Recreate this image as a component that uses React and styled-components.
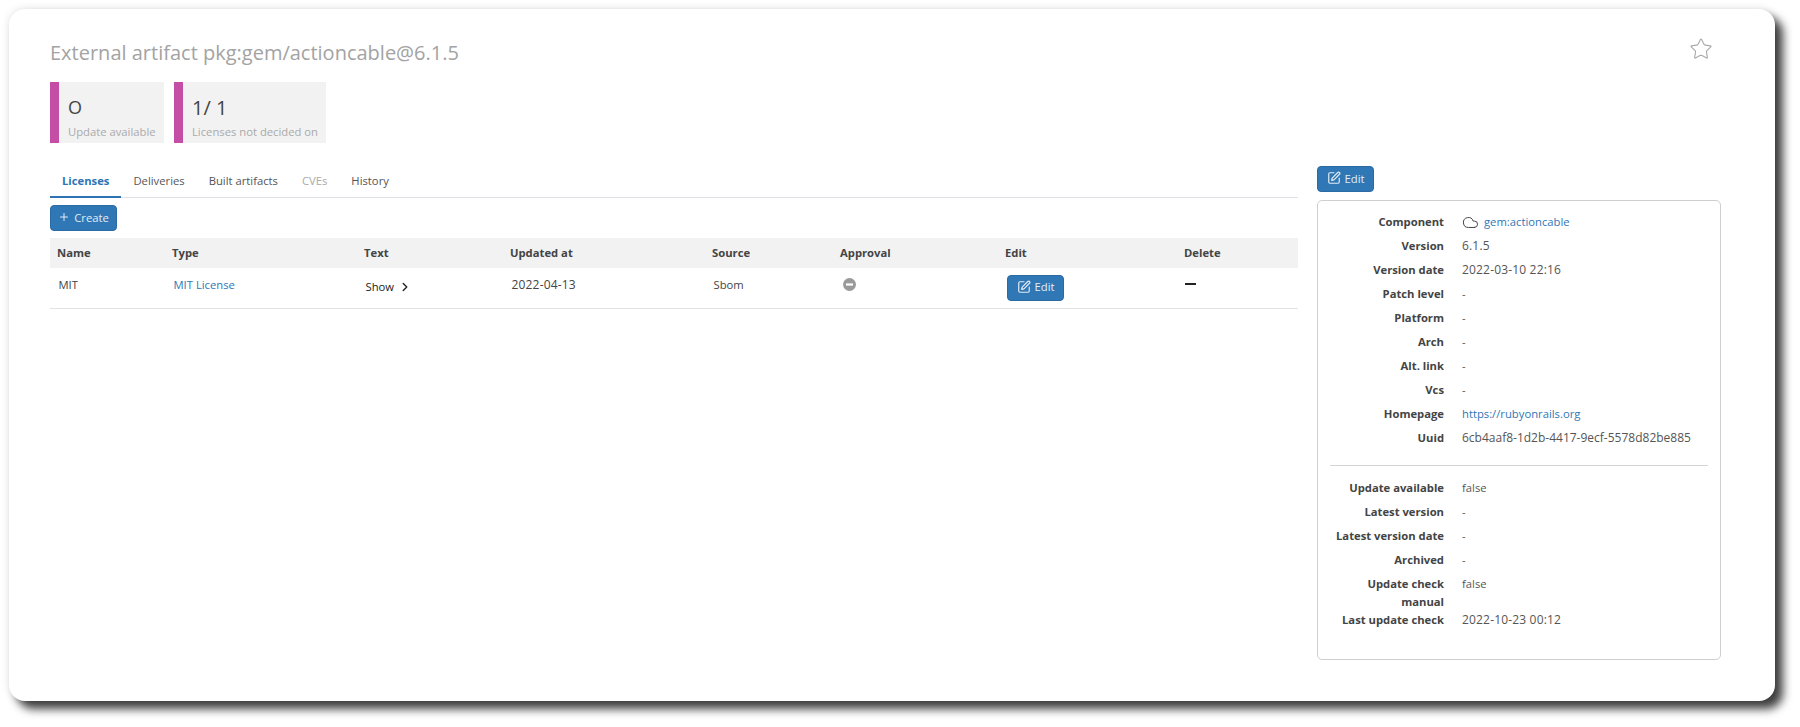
import React from "react";
import styled, { createGlobalStyle } from "styled-components";
import { Star, Cloud, ChevronRight, Plus, SquarePen } from "lucide-react";

const Global = createGlobalStyle`
  html, body { margin: 0; padding: 0; background: #fff; }
  body { font-family: "Open Sans", "Noto Sans", "Liberation Sans", sans-serif; width: 1800px; height: 727px; overflow: hidden; }
`;

const Page = styled.div`
  box-sizing: border-box;
  width: 1800px;
  height: 727px;
  padding: 9px 25px 26px 9px;
`;
const Card = styled.main`
  box-sizing: border-box;
  height: 692px;
  background: #fff;
  border-radius: 16px;
  box-shadow: 8px 8px 10px rgba(0, 0, 0, 0.75), 0 0 8px rgba(0, 0, 0, 0.12);
  padding: 27px 54px 0 41px;
  display: flex;
  flex-direction: column;
`;
const Header = styled.header`
  display: flex;
  justify-content: space-between;
  align-items: flex-start;
  height: 46px;
`;
const Title = styled.h1`
  margin: 3px 0 0;
  font-size: 20px;
  line-height: 28px;
  font-weight: 400;
  color: #a3a3a3;
`;
const StarButton = styled.span`
  display: flex;
  color: #a9a9a9;
  margin: 1px 8px 0 0;
`;
const Stats = styled.div`
  display: flex;
  gap: 10px;
  height: 61px;
`;
const Stat = styled.div`
  box-sizing: border-box;
  width: ${(p) => p.$w}px;
  background: #f2f2f2;
  border-left: 9px solid #c44ea5;
  padding: 12px 0 0 9px;
`;
const StatValue = styled.div`
  font-size: ${(p) => p.$size}px;
  line-height: 27px;
  color: #444;
`;
const StatLabel = styled.div`
  font-size: 11.25px;
  line-height: 16px;
  margin-top: 3px;
  color: #aaa;
  white-space: nowrap;
`;
const Columns = styled.div`
  display: flex;
  gap: 19px;
  margin-top: 23px;
  align-items: flex-start;
`;
const Left = styled.section`
  width: 1248px;
  flex: none;
  padding-top: 4px;
`;
const Tabs = styled.nav`
  display: flex;
  height: 27px;
  border-bottom: 1px solid #dee2e6;
`;
const Tab = styled.a`
  box-sizing: border-box;
  height: 28px;
  padding: 0 12px;
  font-size: 11.25px;
  line-height: 21px;
  color: ${(p) => (p.$active ? "#2e74b5" : p.$disabled ? "#aaa" : "#555")};
  font-weight: ${(p) => (p.$active ? 700 : 400)};
  border-bottom: ${(p) => (p.$active ? "2px solid #2e74b5" : "none")};
  white-space: nowrap;
`;
const Button = styled.button`
  display: flex;
  align-items: center;
  justify-content: center;
  gap: 4px;
  box-sizing: border-box;
  width: ${(p) => p.$w}px;
  height: 26px;
  padding: 0 0 2px;
  border: 1px solid #2a6aa5;
  border-radius: 4px;
  background: #3077b5;
  color: #e3edf5;
  font: 400 11.25px "Open Sans", "Noto Sans", sans-serif;
`;
const CreateRow = styled.div`
  margin-top: 7px;
  height: 26px;
`;
const Table = styled.table`
  width: 1248px;
  margin-top: 7px;
  border-collapse: collapse;
  table-layout: fixed;
  font-size: 11.25px;
`;
const HeadCell = styled.th`
  box-sizing: border-box;
  height: 30px;
  padding: 0 0 2px 7px;
  background: #f2f2f2;
  text-align: left;
  font-size: 11.25px;
  font-weight: 700;
  color: #444;
`;
const Cell = styled.td`
  box-sizing: border-box;
  height: 40px;
  padding: 0 0 ${(p) => p.$pb ?? 6}px ${(p) => p.$pl ?? 8.5}px;
  border-bottom: 1px solid #e2e2e2;
  color: #444;
  vertical-align: middle;
  white-space: nowrap;
`;
const Link = styled.a`
  color: #3077b5;
`;
const ShowToggle = styled.span`
  display: inline-flex;
  align-items: center;
  gap: 4px;
  color: #222;
  padding-top: 4px;
`;
const Badge = styled.svg`
  display: block;
  width: 13px;
  height: 13px;
`;
const Dash = styled.span`
  display: block;
  width: 11px;
  height: 2px;
  background: #222;
`;
const Num = styled.span`
  font-size: 12px;
  letter-spacing: ${(p) => (p.$tight ? 0 : 0.17)}px;
`;
const Right = styled.aside`
  width: 404px;
  flex: none;
  display: flex;
  flex-direction: column;
  align-items: flex-start;
`;
const Panel = styled.div`
  box-sizing: border-box;
  width: 404px;
  height: 460px;
  margin-top: 8px;
  border: 1px solid #cfcfcf;
  border-radius: 5px;
  padding: 12px 12px;
  font-size: 11.25px;
`;
const Rows = styled.dl`
  margin: 0;
  display: grid;
  grid-template-columns: 114px 1fr;
  column-gap: 18px;
  row-gap: 6px;
  line-height: 18px;
`;
const Label = styled.dt`
  text-align: right;
  font-weight: 700;
  color: #444;
`;
const Value = styled.dd`
  margin: 0;
  display: flex;
  align-items: center;
  gap: 5px;
  align-self: start;
  color: #555;
`;
const Divider = styled.hr`
  margin: 18px 0 13px;
  border: 0;
  border-top: 1px solid #d4d4d4;
`;
const ManualRows = styled(Rows)`
  row-gap: 0;
  margin-top: 6px;
`;

const cols = [115, 192, 146, 202, 128, 165, 179, 121];
const first = [
  ["Component", <><Cloud size={17} strokeWidth={1.4} color="#444" /><Link>gem:actioncable</Link></>],
  ["Version", <Num>6.1.5</Num>],
  ["Version date", <Num>2022-03-10 22:16</Num>],
  ["Patch level", "-"],
  ["Platform", "-"],
  ["Arch", "-"],
  ["Alt. link", "-"],
  ["Vcs", "-"],
  ["Homepage", <Link>https://rubyonrails.org</Link>],
  ["Uuid", <Num $tight>6cb4aaf8-1d2b-4417-9ecf-5578d82be885</Num>],
];
const second = [
  ["Update available", "false"],
  ["Latest version", "-"],
  ["Latest version date", "-"],
  ["Archived", "-"],
];

export default function App() {
  return (
    <>
      <Global />
      <Page>
        <Card>
          <Header>
            <Title>External artifact pkg:gem/actioncable@6.1.5</Title>
            <StarButton><Star size={24} strokeWidth={1.1} /></StarButton>
          </Header>
          <Stats>
            <Stat $w={114}>
              <StatValue $size={18}>O</StatValue>
              <StatLabel>Update available</StatLabel>
            </Stat>
            <Stat $w={152}>
              <StatValue $size={20}>1/ 1</StatValue>
              <StatLabel>Licenses not decided on</StatLabel>
            </Stat>
          </Stats>
          <Columns>
            <Left>
              <Tabs>
                <Tab $active>Licenses</Tab>
                <Tab>Deliveries</Tab>
                <Tab>Built artifacts</Tab>
                <Tab $disabled>CVEs</Tab>
                <Tab>History</Tab>
              </Tabs>
              <CreateRow>
                <Button $w={67}><Plus size={12} strokeWidth={2} />Create</Button>
              </CreateRow>
              <Table>
                <colgroup>{cols.map((w, i) => <col key={i} style={{ width: w }} />)}</colgroup>
                <thead>
                  <tr>
                    {["Name", "Type", "Text", "Updated at", "Source", "Approval", "Edit", "Delete"].map((h) => (
                      <HeadCell key={h}>{h}</HeadCell>
                    ))}
                  </tr>
                </thead>
                <tbody>
                  <tr>
                    <Cell>MIT</Cell>
                    <Cell><Link>MIT License</Link></Cell>
                    <Cell><ShowToggle>Show <ChevronRight size={14} strokeWidth={2.4} /></ShowToggle></Cell>
                    <Cell><Num>2022-04-13</Num></Cell>
                    <Cell>Sbom</Cell>
                    <Cell $pl={10}>
                      <Badge viewBox="0 0 13 13">
                        <circle cx="6.5" cy="6.5" r="6.5" fill="#9a9a9a" />
                        <rect x="3" y="5.4" width="7" height="2.2" fill="#fff" />
                      </Badge>
                    </Cell>
                    <Cell $pb={0} $pl={9}><Button $w={57}><SquarePen size={14} />Edit</Button></Cell>
                    <Cell $pb={7} $pl={8}><Dash /></Cell>
                  </tr>
                </tbody>
              </Table>
            </Left>
            <Right>
              <Button $w={57}><SquarePen size={14} />Edit</Button>
              <Panel>
                <Rows>
                  {first.map(([k, v]) => (
                    <React.Fragment key={k}>
                      <Label>{k}</Label>
                      <Value>{v}</Value>
                    </React.Fragment>
                  ))}
                </Rows>
                <Divider />
                <Rows>
                  {second.map(([k, v]) => (
                    <React.Fragment key={k}>
                      <Label>{k}</Label>
                      <Value>{v}</Value>
                    </React.Fragment>
                  ))}
                </Rows>
                <ManualRows>
                  <Label>Update check manual</Label>
                  <Value>false</Value>
                  <Label>Last update check</Label>
                  <Value><Num>2022-10-23 00:12</Num></Value>
                </ManualRows>
              </Panel>
            </Right>
          </Columns>
        </Card>
      </Page>
    </>
  );
}
